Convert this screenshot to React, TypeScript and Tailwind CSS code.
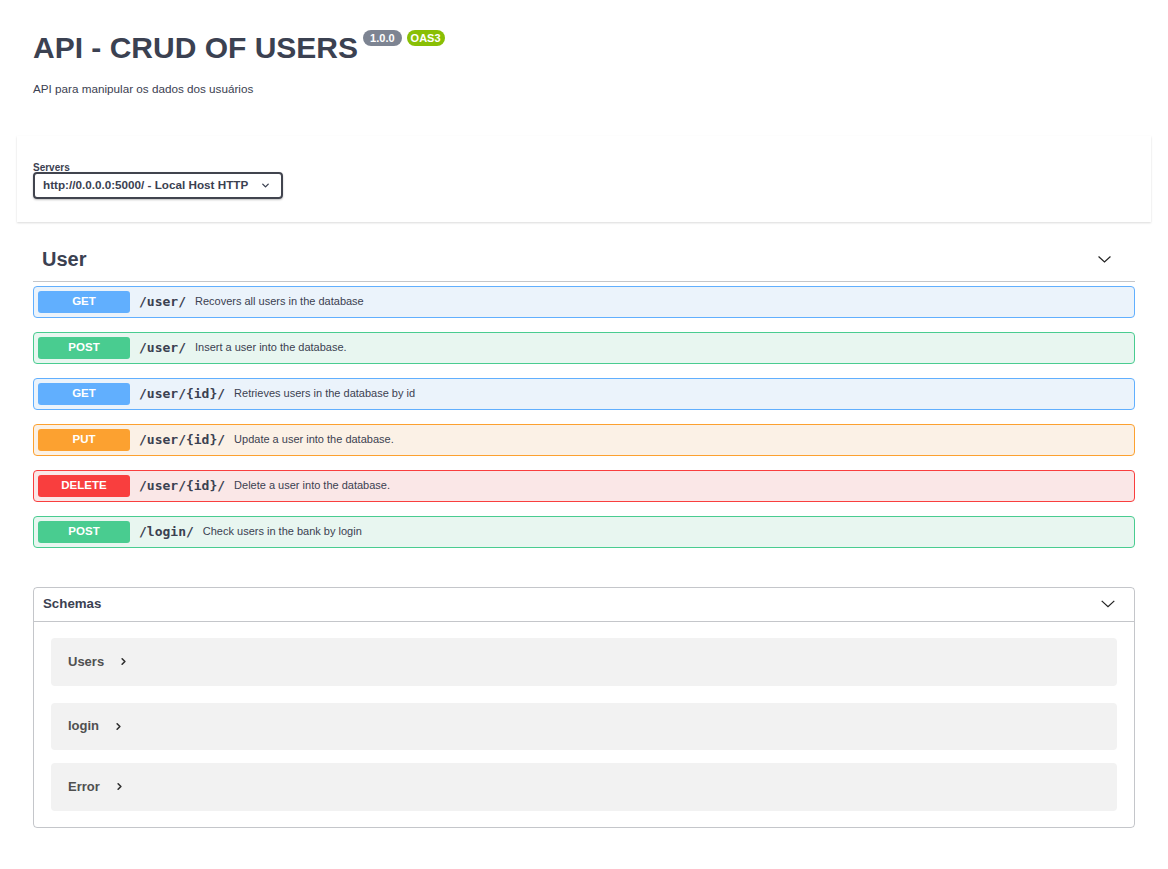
import { ChevronDown, ChevronRight } from "lucide-react";

type Op = { method: "GET" | "POST" | "PUT" | "DELETE"; path: string; summary: string };

const ops: Op[] = [
  { method: "GET", path: "/user/", summary: "Recovers all users in the database" },
  { method: "POST", path: "/user/", summary: "Insert a user into the database." },
  { method: "GET", path: "/user/{id}/", summary: "Retrieves users in the database by id" },
  { method: "PUT", path: "/user/{id}/", summary: "Update a user into the database." },
  { method: "DELETE", path: "/user/{id}/", summary: "Delete a user into the database." },
  { method: "POST", path: "/login/", summary: "Check users in the bank by login" },
];

const styles = {
  GET: { row: "bg-[#ebf3fb] border-[#61affe]", badge: "bg-[#61affe]" },
  POST: { row: "bg-[#e8f6f0] border-[#49cc90]", badge: "bg-[#49cc90]" },
  PUT: { row: "bg-[#fbf1e6] border-[#fca130]", badge: "bg-[#fca130]" },
  DELETE: { row: "bg-[#fae7e7] border-[#f93e3e]", badge: "bg-[#f93e3e]" },
};

const Chevron = ({ className }: { className: string }) => (
  <svg viewBox="0 0 20 20" className={className} fill="none" stroke="#222" strokeWidth={1.4}>
    <path d="M3 6.5 L10 13 L17 6.5" />
  </svg>
);

const OpRow = ({ op }: { op: Op }) => (
  <div className={`flex items-center h-[32px] mb-[14px] border rounded-[4px] px-[4px] ${styles[op.method].row}`}>
    <span
      className={`w-[92px] h-[22px] rounded-[3px] flex items-center justify-center text-white text-[11.5px] font-bold ${styles[op.method].badge}`}
    >
      {op.method}
    </span>
    <span className="ml-[9px] font-['DejaVu_Sans_Mono',monospace] font-bold text-[13px] text-[#3b4151]">
      {op.path}
    </span>
    <span className="ml-[9px] text-[11px] text-[#3b4151]">{op.summary}</span>
  </div>
);

const SchemaItem = ({ name, className }: { name: string; className: string }) => (
  <div className={`bg-[#f2f2f2] rounded-[4px] flex items-center pl-[17px] ${className}`}>
    <span className="text-[13px] font-bold text-[#505050]">{name}</span>
    <ChevronRight className="ml-[14px] w-[11px] h-[11px] text-[#303030]" strokeWidth={3.5} />
  </div>
);

export default function App() {
  return (
    <div className="min-h-[869px] bg-white font-['Liberation_Sans',Arial,sans-serif] text-[#3b4151]">
      {/* info */}
      <div className="px-[33px] pt-[31px]">
        <div className="flex items-start">
          <h2 className="text-[30px] leading-[34px] font-bold">API - CRUD OF USERS</h2>
          <span className="ml-[5px] -mt-[1px] h-[16px] rounded-full bg-[#7d8492] px-[4px] text-[11px] font-bold text-white leading-[16px] whitespace-pre">
            {" 1.0.0 "}
          </span>
          <span className="ml-[5px] -mt-[1px] h-[16px] rounded-full bg-[#89bf04] px-[4px] text-[11px] font-bold text-white leading-[16px]">
            OAS3
          </span>
        </div>
        <p className="mt-[15px] text-[11.7px]">API para manipular os dados dos usuários</p>
      </div>

      {/* servers */}
      <div className="mx-[17px] mt-[38px] bg-white shadow-[0_1px_2px_0_rgba(0,0,0,0.15)] px-[16px] pt-[27px] pb-[23px]">
        <div className="text-[10px] font-bold leading-[10px]">Servers</div>
        <div className="-mt-[1px] w-[250px] h-[27px] border-2 border-[#41444e] rounded-[4px] shadow-[0_1px_2px_0_rgba(0,0,0,0.25)] flex items-center pl-[8px]">
          <span className="text-[11.7px] font-bold">http://0.0.0.0:5000/ - Local Host HTTP</span>
          <ChevronDown className="ml-[12px] w-[11px] h-[11px] text-[#3b4151]" strokeWidth={3} />
        </div>
      </div>

      <div className="mx-[33px]">
        {/* tag */}
        <div className="mt-[20px] flex items-center justify-between h-[40px] pl-[9px] pr-[22px] pb-[4px] border-b border-[rgba(59,65,81,0.3)]">
          <h3 className="text-[20px] font-bold">User</h3>
          <Chevron className="w-[17px] h-[17px]" />
        </div>
        <div className="mt-[4px]">
          {ops.map((op, i) => (
            <OpRow key={i} op={op} />
          ))}
        </div>

        {/* schemas */}
        <div className="mt-[39px] border border-[rgba(59,65,81,0.3)] rounded-[4px]">
          <div className="h-[34px] flex items-center justify-between pl-[9px] pr-[17px] border-b border-[rgba(59,65,81,0.3)]">
            <span className="text-[13.3px] font-bold text-[#3b4151]">Schemas</span>
            <Chevron className="w-[18px] h-[18px]" />
          </div>
          <div className="px-[17px] pt-[16px] pb-[16px]">
            <SchemaItem name="Users" className="h-[48px] mb-[17px]" />
            <SchemaItem name="login" className="h-[47px] mb-[13px]" />
            <SchemaItem name="Error" className="h-[48px]" />
          </div>
        </div>
      </div>
    </div>
  );
}
